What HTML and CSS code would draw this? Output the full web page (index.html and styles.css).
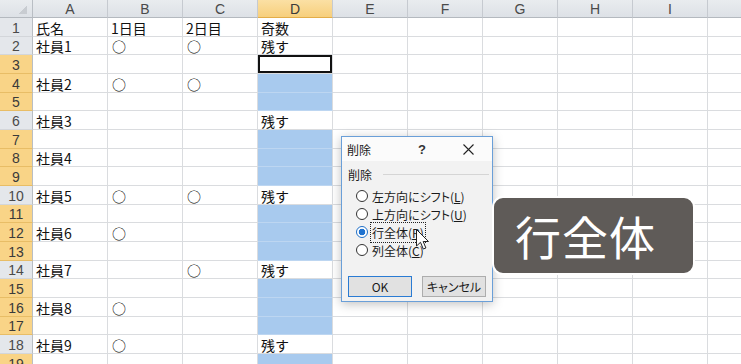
FILE: index.html
```html
<!DOCTYPE html>
<html lang="ja">
<head>
  <meta charset="UTF-8">
  <title>削除 - 行全体</title>
  <link rel="stylesheet" href="styles.css">
</head>
<body>
  <div class="sheet">
    <table class="grid">
      <colgroup>
        <col class="rh"><col><col><col><col><col><col><col><col><col><col>
      </colgroup>
      <tr class="head"><th class="corner"></th><th>A</th><th>B</th><th>C</th><th class="on">D</th><th>E</th><th>F</th><th>G</th><th>H</th><th>I</th><th></th></tr>
      <tr><th>1</th><td>氏名</td><td>1日目</td><td>2日目</td><td>奇数</td><td></td><td></td><td></td><td></td><td></td><td></td></tr>
      <tr><th>2</th><td>社員1</td><td class="mark">○</td><td class="mark">○</td><td>残す</td><td></td><td></td><td></td><td></td><td></td><td></td></tr>
      <tr><th class="on">3</th><td></td><td></td><td></td><td class="act"></td><td></td><td></td><td></td><td></td><td></td><td></td></tr>
      <tr><th class="on">4</th><td>社員2</td><td class="mark">○</td><td class="mark">○</td><td class="sel"></td><td></td><td></td><td></td><td></td><td></td><td></td></tr>
      <tr><th class="on">5</th><td></td><td></td><td></td><td class="sel"></td><td></td><td></td><td></td><td></td><td></td><td></td></tr>
      <tr><th>6</th><td>社員3</td><td></td><td></td><td>残す</td><td></td><td></td><td></td><td></td><td></td><td></td></tr>
      <tr><th class="on">7</th><td></td><td></td><td></td><td class="sel"></td><td></td><td></td><td></td><td></td><td></td><td></td></tr>
      <tr><th class="on">8</th><td>社員4</td><td></td><td></td><td class="sel"></td><td></td><td></td><td></td><td></td><td></td><td></td></tr>
      <tr><th class="on">9</th><td></td><td></td><td></td><td class="sel"></td><td></td><td></td><td></td><td></td><td></td><td></td></tr>
      <tr><th>10</th><td>社員5</td><td class="mark">○</td><td class="mark">○</td><td>残す</td><td></td><td></td><td></td><td></td><td></td><td></td></tr>
      <tr><th class="on">11</th><td></td><td></td><td></td><td class="sel"></td><td></td><td></td><td></td><td></td><td></td><td></td></tr>
      <tr><th class="on">12</th><td>社員6</td><td class="mark">○</td><td></td><td class="sel"></td><td></td><td></td><td></td><td></td><td></td><td></td></tr>
      <tr><th class="on">13</th><td></td><td></td><td></td><td class="sel"></td><td></td><td></td><td></td><td></td><td></td><td></td></tr>
      <tr><th>14</th><td>社員7</td><td></td><td class="mark">○</td><td>残す</td><td></td><td></td><td></td><td></td><td></td><td></td></tr>
      <tr><th class="on">15</th><td></td><td></td><td></td><td class="sel"></td><td></td><td></td><td></td><td></td><td></td><td></td></tr>
      <tr><th class="on">16</th><td>社員8</td><td class="mark">○</td><td></td><td class="sel"></td><td></td><td></td><td></td><td></td><td></td><td></td></tr>
      <tr><th class="on">17</th><td></td><td></td><td></td><td class="sel"></td><td></td><td></td><td></td><td></td><td></td><td></td></tr>
      <tr><th>18</th><td>社員9</td><td class="mark">○</td><td></td><td>残す</td><td></td><td></td><td></td><td></td><td></td><td></td></tr>
      <tr><th class="on">19</th><td></td><td></td><td></td><td class="sel"></td><td></td><td></td><td></td><td></td><td></td><td></td></tr>
    </table>

    <!-- delete dialog -->
    <div class="dialog">
      <div class="dlg-title">
        <span class="dlg-name">削除</span>
        <span class="dlg-help">?</span>
        <span class="dlg-close">
          <svg width="11" height="11" viewBox="0 0 11 11"><path d="M0.5 0.5L10.5 10.5M10.5 0.5L0.5 10.5" stroke="#222" stroke-width="1.1" fill="none"/></svg>
        </span>
      </div>
      <div class="dlg-body">
        <div class="group-label"><span>削除</span><i class="rule"></i></div>
        <ul class="options">
          <li><span class="radio"></span><span class="opt">左方向にシフト(<u>L</u>)</span></li>
          <li><span class="radio"></span><span class="opt">上方向にシフト(<u>U</u>)</span></li>
          <li><span class="radio checked"></span><span class="opt focus">行全体(<u>R</u>)</span></li>
          <li><span class="radio"></span><span class="opt">列全体(<u>C</u>)</span></li>
        </ul>
        <div class="buttons">
          <button class="btn default">OK</button>
          <button class="btn">キャンセル</button>
        </div>
      </div>
    </div>

    <svg class="cursor" width="14" height="22" viewBox="0 0 14 22">
      <path d="M0.5 0.5L0.5 17L4.5 13.3L7.3 20L9.9 19L7.2 12.5L12.5 12.5Z" fill="#fff" stroke="#222" stroke-width="1" stroke-linejoin="round"/>
    </svg>

    <div class="caption">行全体</div>
  </div>
</body>
</html>
```

FILE: styles.css
```css
* {
  margin: 0;
  padding: 0;
  box-sizing: border-box;
}

html, body {
  width: 741px;
  height: 364px;
  overflow: hidden;
  background: #fff;
}

body {
  font-family: "Noto Sans CJK JP", sans-serif;
  color: #111;
}

.sheet {
  position: relative;
  width: 741px;
  height: 364px;
  overflow: hidden;
}

/* spreadsheet grid */
.grid {
  border-collapse: separate;
  border-spacing: 0;
  table-layout: fixed;
  width: 783px;
}

.grid col { width: 75px; }
.grid col.rh { width: 33px; }

.grid tr { height: 18.67px; }
.grid tr.head { height: 18px; }

.grid th {
  font-family: "Liberation Sans", Arial, sans-serif;
  font-weight: normal;
  font-size: 14px;
  line-height: 1;
  color: #4a4a4a;
  background: #e4e7eb;
  border-right: 1px solid #b9bec4;
  border-bottom: 1px solid #d3d6da;
  text-align: center;
  vertical-align: middle;
  padding-top: 2px;
}

.grid .head th {
  background: linear-gradient(#e9ecef, #dde1e6);
  border-right: 1px solid #c6cad0;
  border-bottom: 1px solid #b4b9bf;
  padding-top: 1px;
}

.grid .head th.corner {
  border-right-color: #b9bec4;
  background: linear-gradient(135deg, transparent 50%, #c8ccd1 50%) no-repeat right 5px bottom 3px / 9px 9px,
              linear-gradient(#e9ecef, #dde1e6);
}

.grid th.on {
  background: #f9d487;
  border-bottom-color: #e8bd66;
  color: #3a3a3a;
}

.grid .head th.on {
  background: linear-gradient(#fbe0a4, #f7cf7c);
  border-bottom-color: #e3ad48;
}

.grid td {
  border-right: 1px solid #dadcdf;
  border-bottom: 1px solid #dadcdf;
  padding: 0 3px 1px;
  font-size: 14px;
  line-height: 14px;
  vertical-align: bottom;
  white-space: nowrap;
}

.grid td.mark {
  padding-left: 4px;
  color: #000;
}

.grid td.sel {
  background: #a8caee;
  border-bottom-color: #bdd6f1;
}

.grid td.act {
  box-shadow: inset 0 0 0 2px #111;
}

/* dialog */
.dialog {
  position: absolute;
  left: 341px;
  top: 136px;
  width: 152px;
  height: 166px;
  border: 1px solid #6a9fd8;
  background: #f2f2f2;
  box-shadow: 0 2px 10px rgba(0, 0, 0, 0.25);
  font-size: 12px;
  font-feature-settings: "palt";
  color: #1a1a1a;
}

.dlg-title {
  display: flex;
  align-items: center;
  height: 24px;
  padding-left: 5px;
  background: #fbfbfb;
}

.dlg-name { flex: 1; }

.dlg-help {
  width: 45px;
  font-family: "Liberation Sans", Arial, sans-serif;
  font-size: 13px;
  font-weight: bold;
  color: #333;
}

.dlg-close {
  display: flex;
  width: 29px;
}

.dlg-body {
  padding: 6px 0 0;
}

.group-label {
  display: flex;
  align-items: center;
  padding-left: 6px;
  height: 14px;
}

.group-label .rule {
  flex: 1;
  height: 1px;
  margin: 0 3px 0 11px;
  background: #d5d5d5;
}

.options {
  list-style: none;
  padding: 6px 0 0 14px;
}

.options li {
  display: flex;
  align-items: center;
  gap: 4px;
  height: 18px;
}

.radio {
  width: 12px;
  height: 12px;
  border: 1px solid #333;
  border-radius: 50%;
  background: #fff;
}

.radio.checked {
  border-color: #1e6fc8;
  background: radial-gradient(circle, #1f72cf 0 3px, #fff 3.6px);
}

.opt u { text-underline-offset: 1px; }

.opt.focus {
  outline: 1px dotted #222;
  outline-offset: 1px;
}

.buttons {
  display: flex;
  gap: 10px;
  padding: 17px 0 0 6px;
}

.btn {
  width: 64px;
  height: 21px;
  border: 1px solid #adadad;
  background: #e1e1e1;
  font-family: "Noto Sans CJK JP", sans-serif;
  font-size: 12px;
  font-feature-settings: "palt";
  color: #1a1a1a;
}

.btn.default { border-color: #2a7bd3; }

.cursor {
  position: absolute;
  left: 416px;
  top: 229px;
}

/* caption overlay */
.caption {
  position: absolute;
  left: 492px;
  top: 196px;
  width: 203px;
  height: 79px;
  display: flex;
  align-items: center;
  padding: 0 0 2px 21px;
  border: 2px solid #fff;
  border-radius: 11px;
  background: #5f5b58;
  color: #fff;
  font-size: 46px;
  letter-spacing: 1px;
}
```
